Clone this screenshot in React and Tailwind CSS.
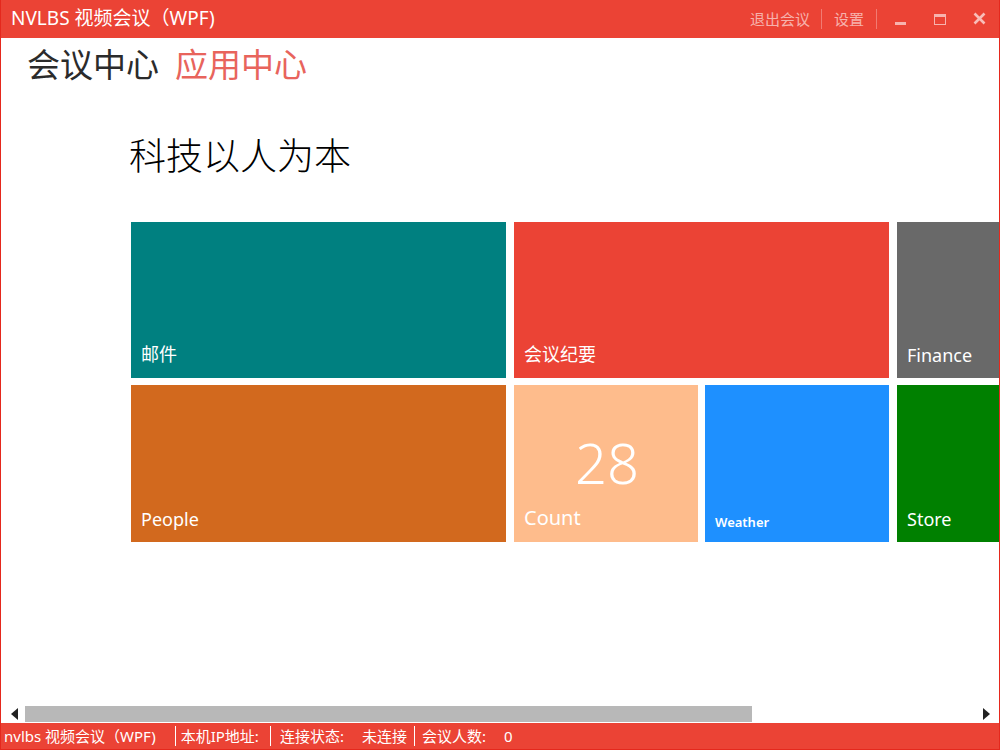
const FONT = { fontFamily: '"Noto Sans", "Noto Sans CJK SC", sans-serif' }

function Tile({ color, label, w, labelClass = 'text-[18px]', children }) {
  return (
    <div className={`${color} ${w} h-full shrink-0 grid text-white`}>
      {children}
      <div className={`col-start-1 row-start-1 self-end pl-[10px] ${labelClass}`}>{label}</div>
    </div>
  )
}

function TitleButtons() {
  return (
    <div className="flex items-center h-full text-[15px] text-white/60">
      <span className="pr-[11px]">退出会议</span>
      <span className="w-px h-[20px] bg-white/30" />
      <span className="px-[12px]">设置</span>
      <span className="w-px h-[20px] bg-white/30" />
      <div className="w-[44px] flex justify-center pl-[2px]">
        <span className="w-[11px] h-[3px] mt-[9px] bg-white/60" />
      </div>
      <div className="w-[38px] flex justify-center">
        <span className="w-[12px] h-[11px] border border-white/60 border-t-[3px]" />
      </div>
      <div className="w-[40px] flex justify-center pb-[1px]">
        <svg width="13" height="13" viewBox="0 0 13 13">
          <path d="M1.5 1.5 L11.5 11.5 M11.5 1.5 L1.5 11.5" stroke="rgba(255,255,255,0.65)" strokeWidth="2.6" />
        </svg>
      </div>
    </div>
  )
}

function StatusBar() {
  return (
    <div className="h-[26px] shrink-0 bg-[#eb4335] flex items-center text-white text-[15px] pl-[3px]">
      <span className="pr-[19px]">nvlbs 视频会议（WPF)</span>
      <span className="w-px h-[20px] bg-white" />
      <span className="pl-[5px] pr-[11px]">本机IP地址:</span>
      <span className="w-px h-[20px] bg-white" />
      <span className="pl-[9px]">连接状态:</span>
      <span className="pl-[18px] pr-[7px]">未连接</span>
      <span className="w-px h-[20px] bg-white" />
      <span className="pl-[7px]">会议人数:</span>
      <span className="pl-[18px]">0</span>
    </div>
  )
}

function ScrollBar() {
  return (
    <div className="h-[19px] shrink-0 flex items-center">
      <div className="w-[24px] flex justify-center pl-[3px]">
        <svg width="7" height="12" viewBox="0 0 7 12"><path d="M7 0 L0 6 L7 12 Z" fill="#222" /></svg>
      </div>
      <div className="w-[727px] h-[16px] bg-[#b8b8b8]" />
      <div className="flex-1" />
      <div className="w-[24px] flex justify-center pr-[2px]">
        <svg width="7" height="12" viewBox="0 0 7 12"><path d="M0 0 L7 6 L0 12 Z" fill="#222" /></svg>
      </div>
    </div>
  )
}

export default function App() {
  return (
    <div className="w-[1000px] h-[750px] bg-white border border-[#e5281d] border-t-0 flex flex-col overflow-hidden" style={FONT}>
      <div className="h-[38px] shrink-0 bg-[#eb4335] flex items-center justify-between pl-[10px]">
        <span className="text-white text-[19px] pb-[2px]">NVLBS 视频会议（WPF)</span>
        <TitleButtons />
      </div>

      <div className="flex-1 overflow-hidden flex flex-col">
        <div className="flex items-baseline gap-[16px] pl-[26px] pt-[3px] text-[33px] leading-[48px]">
          <span className="text-[#2b2b2b]">会议中心</span>
          <span className="text-[#e8645c]">应用中心</span>
        </div>

        <div className="pl-[128px] mt-[45px] text-[37px] font-light text-black leading-[44px]">科技以人为本</div>

        <div className="ml-[130px] mt-[44px] flex flex-col gap-[7px]">
          <div className="flex gap-[8px] h-[156px]">
            <Tile color="bg-[#008080]" w="w-[375px]" label="邮件" labelClass="text-[18px] pb-[10px]" />
            <Tile color="bg-[#eb4335]" w="w-[375px]" label="会议纪要" labelClass="text-[18px] pb-[10px]" />
            <Tile color="bg-[#696969]" w="w-[375px]" label="Finance" labelClass="text-[18px] pb-[9px]" />
          </div>
          <div className="flex gap-[8px] h-[157px]">
            <Tile color="bg-[#d2691e]" w="w-[375px]" label="People" labelClass="text-[18px] pb-[9px]" />
            <div className="flex gap-[7px] h-full">
              <Tile color="bg-[#febc8c]" w="w-[184px]" label="Count" labelClass="text-[20px] pb-[9px]">
                <div className="col-start-1 row-start-1 self-center justify-self-center text-[56px] font-light leading-none pb-[4px] pl-[2px]">28</div>
              </Tile>
              <Tile color="bg-[#1e90ff]" w="w-[184px]" label="Weather" labelClass="text-[13px] font-semibold pb-[10px]" />
            </div>
            <Tile color="bg-[#008000]" w="w-[184px]" label="Store" labelClass="text-[18px] pb-[9px]" />
          </div>
        </div>
      </div>

      <ScrollBar />
      <StatusBar />
    </div>
  )
}
